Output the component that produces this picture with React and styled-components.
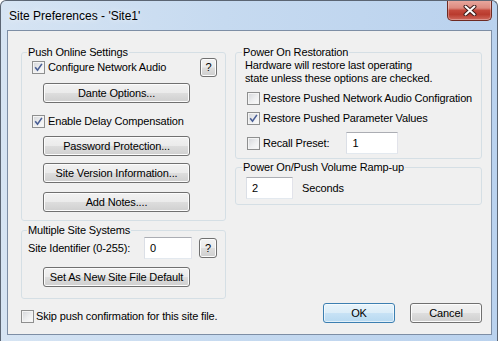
import React from 'react';
import styled, { createGlobalStyle } from 'styled-components';

const Global = createGlobalStyle`
  html, body { margin: 0; padding: 0; background: #ffffff; }
  body { font-family: "Liberation Sans", Arial, sans-serif; font-size: 11px; letter-spacing: -0.15px; color: #000; }
  * { box-sizing: border-box; }
`;

const Window = styled.div`
  width: 498px;
  height: 341px;
  display: flex;
  flex-direction: column;
  padding: 0 5px 7px 6px;
  border: 1px solid #5b6573;
  border-bottom: none;
  border-radius: 6px 6px 0 0;
  background: linear-gradient(to right, #d6e4f3 0%, #c6daf0 45%, #bad2ee 100%);
  overflow: hidden;
`;

const TitleBar = styled.div`
  height: 29px;
  display: flex;
  align-items: flex-start;
  flex: none;
`;

const Title = styled.span`
  margin: 8px 0 0 2px;
  font-size: 12px;
  line-height: 15px;
  letter-spacing: 0;
  color: #000;
  text-shadow: 0 0 6px rgba(255, 255, 255, 0.9);
`;

const CloseButton = styled.div`
  margin-left: auto;
  margin-top: -1px;
  width: 45px;
  height: 21px;
  display: flex;
  align-items: center;
  justify-content: center;
  border: 1px solid #6e2a22;
  border-top: none;
  border-radius: 0 0 5px 5px;
  background: linear-gradient(to bottom, #e9aaa1 0%, #dc8a7f 40%, #c4493c 52%, #b93b2e 72%, #d0695d 100%);
  box-shadow: inset 0 0 0 1px rgba(255, 255, 255, 0.3);
`;

const Client = styled.div`
  flex: 1;
  display: grid;
  grid-template-columns: 205px 247px;
  column-gap: 9px;
  padding: 14px 9px 11px 13px;
  background: #f0f0f0;
  border: 1px solid #7d8ea5;
`;

const Column = styled.div`
  display: flex;
  flex-direction: column;
`;

const Group = styled.fieldset`
  margin: ${(p) => p.$mt || 0}px 0 0 0;
  padding: 0 0 ${(p) => p.$pb}px 0;
  border: 1px solid #d5dfe5;
  border-radius: 3px;
  min-width: 0;
`;

const Legend = styled.legend`
  margin-left: ${(p) => p.$ml}px;
  padding: 0 1px;
  font-size: 11px;
  line-height: 15px;
`;

const Body = styled.div`
  display: flex;
  flex-direction: column;
  padding: 0 ${(p) => p.$pr || 0}px 0 ${(p) => p.$pl}px;
`;

const Row = styled.div`
  display: flex;
  align-items: center;
  height: ${(p) => p.$h}px;
  margin-top: ${(p) => p.$mt || 0}px;
  margin-left: ${(p) => p.$ml || 0}px;
  gap: ${(p) => p.$gap || 0}px;
`;

const Label = styled.span`
  line-height: 13px;
  white-space: nowrap;
  margin-left: ${(p) => p.$ml || 0}px;
`;

const Note = styled.div`
  margin-top: ${(p) => p.$mt || 0}px;
  line-height: 13px;
  white-space: nowrap;
`;

const Button = styled.div`
  flex: none;
  width: ${(p) => p.$w}px;
  height: ${(p) => p.$h || 20}px;
  margin-top: ${(p) => p.$mt || 0}px;
  margin-left: ${(p) => p.$ml || 0}px;
  display: flex;
  align-items: center;
  justify-content: center;
  line-height: 13px;
  border: 1px solid ${(p) => (p.$default ? '#3c7fb1' : '#707070')};
  border-radius: 3px;
  background: ${(p) =>
    p.$default
      ? 'linear-gradient(to bottom, #e8f4fb 0%, #dcedf8 48%, #c7e2f5 52%, #b7d9f1 100%)'
      : 'linear-gradient(to bottom, #f2f2f2 0%, #ebebeb 48%, #dddddd 52%, #cfcfcf 100%)'};
  box-shadow: inset 0 0 0 1px ${(p) => (p.$default ? 'rgba(255,255,255,0.6)' : '#fcfcfc')};
  white-space: nowrap;
`;

const HelpButton = styled(Button)`
  margin-left: auto;
`;

const TextBox = styled.div`
  flex: none;
  width: ${(p) => p.$w}px;
  height: 22px;
  margin-left: ${(p) => (p.$auto ? 'auto' : `${p.$ml || 0}px`)};
  padding: 0 5px;
  display: flex;
  align-items: center;
  background: #ffffff;
  border: 1px solid;
  border-color: #abadb3 #e2e3ea #e3e9ef #dbdfe6;
  line-height: 13px;
`;

const Box = styled.span`
  flex: none;
  width: 13px;
  height: 13px;
  display: inline-flex;
  align-items: center;
  justify-content: center;
  border: 1px solid #8e8f8f;
  background: linear-gradient(135deg, #d3d5d9 0%, #eeeff0 55%, #fbfbfb 100%);
  box-shadow: inset 0 0 0 1px #f4f4f4;
`;

const ButtonBar = styled.div`
  margin-top: auto;
  display: flex;
  justify-content: flex-end;
  gap: 15px;
`;

const CheckBox = ({ checked }) => (
  <Box>
    {checked && (
      <svg width="9" height="9" viewBox="0 0 9 9">
        <path d="M1.2 4.3 L3.5 7.2 L7.9 0.9" fill="none" stroke="#4a5f95" strokeWidth="1.6" />
      </svg>
    )}
  </Box>
);

const CloseX = () => (
  <svg width="14" height="11" viewBox="0 0 14 11">
    <path d="M2.5 1.5 L11.5 9.5 M11.5 1.5 L2.5 9.5" stroke="#3d1c1a" strokeWidth="4" strokeLinecap="round" />
    <path d="M2.5 1.5 L11.5 9.5 M11.5 1.5 L2.5 9.5" stroke="#ffffff" strokeWidth="2" strokeLinecap="round" />
  </svg>
);

export default function App() {
  return (
    <>
      <Global />
      <Window>
        <TitleBar>
          <Title>Site Preferences - 'Site1'</Title>
          <CloseButton>
            <CloseX />
          </CloseButton>
        </TitleBar>
        <Client>
          <Column>
            <Group $pb={8}>
              <Legend $ml={5}>Push Online Settings</Legend>
              <Body $pl={10} $pr={8}>
                <Row $h={19} $mt={-2} $gap={3}>
                  <CheckBox checked />
                  <Label>Configure Network Audio</Label>
                  <HelpButton $w={17} $h={19}>?</HelpButton>
                </Row>
                <Button $w={147} $mt={6} $ml={11}>Dante Options...</Button>
                <Row $h={14} $mt={11} $gap={3}>
                  <CheckBox checked />
                  <Label>Enable Delay Compensation</Label>
                </Row>
                <Button $w={147} $mt={8} $ml={11}>Password Protection...</Button>
                <Button $w={147} $mt={7} $ml={11}>Site Version Information...</Button>
                <Button $w={147} $mt={9} $ml={11}>Add Notes....</Button>
              </Body>
            </Group>
            <Group $mt={2} $pb={11}>
              <Legend $ml={5}>Multiple Site Systems</Legend>
              <Body $pl={6} $pr={8}>
                <Row $h={22} $mt={-1}>
                  <Label>Site Identifier (0-255):</Label>
                  <TextBox $w={48} $auto>0</TextBox>
                  <Button $w={18} $ml={7}>?</Button>
                </Row>
                <Button $w={147} $mt={8} $ml={15}>Set As New Site File Default</Button>
              </Body>
            </Group>
            <Row $h={13} $mt={11} $gap={2}>
              <CheckBox />
              <Label>Skip push confirmation for this site file.</Label>
            </Row>
          </Column>
          <Column>
            <Group $pb={4}>
              <Legend $ml={6}>Power On Restoration</Legend>
              <Body $pl={9}>
                <Note $mt={-1}>
                  Hardware will restore last operating
                  <br />
                  state unless these options are checked.
                </Note>
                <Row $h={14} $mt={6} $ml={2} $gap={3}>
                  <CheckBox />
                  <Label>Restore Pushed Network Audio Configration</Label>
                </Row>
                <Row $h={14} $mt={6} $ml={2} $gap={3}>
                  <CheckBox checked />
                  <Label>Restore Pushed Parameter Values</Label>
                </Row>
                <Row $h={22} $mt={7} $ml={2} $gap={3}>
                  <CheckBox />
                  <Label>Recall Preset:</Label>
                  <TextBox $w={52} $ml={14}>1</TextBox>
                </Row>
              </Body>
            </Group>
            <Group $mt={1} $pb={5}>
              <Legend $ml={6}>Power On/Push Volume Ramp-up</Legend>
              <Body $pl={10}>
                <Row $h={22} $mt={2}>
                  <TextBox $w={47}>2</TextBox>
                  <Label $ml={9}>Seconds</Label>
                </Row>
              </Body>
            </Group>
            <ButtonBar>
              <Button $w={72} $default>OK</Button>
              <Button $w={72}>Cancel</Button>
            </ButtonBar>
          </Column>
        </Client>
      </Window>
    </>
  );
}
